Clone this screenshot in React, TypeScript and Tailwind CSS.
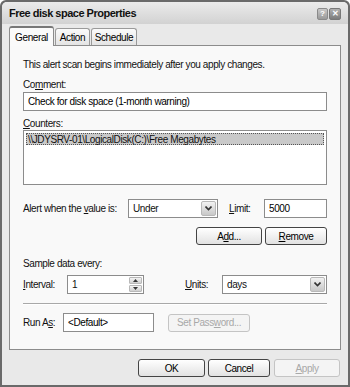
import React from 'react';

const font = { fontFamily: '"Liberation Sans", Arial, sans-serif' };

const U: React.FC<{ children: React.ReactNode }> = ({ children }) => <span className="underline underline-offset-[1px]">{children}</span>;

const Button: React.FC<{ children: React.ReactNode; w: number; disabled?: boolean; className?: string }> = ({ children, w, disabled, className }) => (
    <div
        className={`h-[18px] flex items-center justify-center rounded-[3px] border text-[10px] tracking-[-0.4px] ${
            disabled
                ? 'border-[#c4c4c4] bg-[#f4f4f4] text-[#a8a8a8]'
                : 'border-[#444] bg-gradient-to-b from-[#ffffff] to-[#e2e2e2] text-black'
        } ${className || ''}`}
        style={{ width: w }}
    >
        {children}
    </div>
);

const DropArrow: React.FC = () => (
    <div className="w-[15px] h-[15px] my-[1px] mr-[1px] rounded-[2px] border border-[#b8b8b8] bg-gradient-to-b from-[#f2f2f2] to-[#c8c8c8] flex items-center justify-center">
        <svg width="7" height="5" viewBox="0 0 7 5">
            <path d="M0.5 0.5 L3.5 3.5 L6.5 0.5" fill="none" stroke="#333" strokeWidth="1.6" />
        </svg>
    </div>
);

const Input: React.FC<{ value: string; className?: string }> = ({ value, className }) => (
    <div className={`h-[19px] border border-[#8c8c8c] bg-white flex items-center px-[4px] text-black ${className || ''}`}>
        {value}
    </div>
);

const App: React.FC = () => {
    return (
        <div style={font} className="w-[350px] h-[387px] bg-[#6a6a6a] p-[2px] rounded-t-[6px] overflow-hidden">
            <div className="w-full h-full bg-[#e9e9e9] rounded-t-[5px] flex flex-col">
                {/* title bar */}
                <div className="h-[22px] flex items-center justify-between pl-[7px] pr-[7px] bg-gradient-to-b from-[#ebebeb] to-[#d2d2d2] rounded-t-[5px]">
                    <span className="text-[11px] font-bold text-[#111] tracking-[-0.5px]">Free disk space Properties</span>
                    <div className="flex gap-[1px] mt-[1px]">
                        <div className="w-[11px] h-[12px] rounded-[2px] border border-[#8a8a8a] bg-gradient-to-b from-[#c8c8c8] to-[#9a9a9a] flex items-center justify-center text-white text-[8px] font-bold leading-none">?</div>
                        <div className="w-[12px] h-[12px] rounded-[2px] border border-[#777] bg-gradient-to-b from-[#b0b0b0] to-[#7c7c7c] flex items-center justify-center text-white text-[8px] font-bold leading-none">✕</div>
                    </div>
                </div>

                {/* tabs */}
                <div className="flex items-end h-[21px] pl-[7px] text-[10px] tracking-[-0.4px]">
                    <div className="relative z-10 h-[20px] w-[45px] bg-[#fafafa] border border-b-0 border-[#8c8c8c] rounded-t-[3px] border-t-2 border-t-[#777] flex items-center justify-center text-black -mb-[1px]">
                        General
                    </div>
                    <div className="h-[17px] w-[35px] ml-[1px] bg-gradient-to-b from-[#fbfbfb] to-[#e4e4e4] border border-b-0 border-[#9a9a9a] rounded-t-[3px] flex items-center justify-center text-black">
                        Action
                    </div>
                    <div className="h-[17px] w-[46px] ml-[1px] bg-gradient-to-b from-[#fbfbfb] to-[#e4e4e4] border border-b-0 border-[#9a9a9a] rounded-t-[3px] flex items-center justify-center text-black">
                        Schedule
                    </div>
                </div>

                {/* panel */}
                <div className="mx-[7px] h-[305px] border border-[#8c8c8c] bg-[#f9f9f9] px-[13px] text-[10px] tracking-[-0.4px] text-[#111] leading-[13px]">
                    <div className="mt-[12px]">This alert scan begins immediately after you apply changes.</div>
                    <div className="mt-[7px]">Co<U>m</U>ment:</div>
                    <Input value="Check for disk space (1-month warning)" className="mt-[1px]" />
                    <div className="mt-[6px]"><U>C</U>ounters:</div>
                    <div className="h-[55px] border border-[#8c8c8c] bg-white p-[2px]">
                        <div className="h-[12px] bg-[#c9c9c9] border border-dotted border-[#555] flex items-center px-[1px]">
                            \\JDYSRV-01\LogicalDisk(C:)\Free Megabytes
                        </div>
                    </div>

                    <div className="mt-[14px] flex items-center h-[19px]">
                        <span className="w-[105px]">Alert when the <U>v</U>alue is:</span>
                        <div className="w-[90px] h-[19px] border border-[#8c8c8c] bg-white flex items-center justify-between pl-[4px]">
                            <span>Under</span>
                            <DropArrow />
                        </div>
                        <span className="ml-[11px] w-[35px]"><U>L</U>imit:</span>
                        <Input value="5000" className="flex-1" />
                    </div>

                    <div className="mt-[9px] flex justify-end gap-[3px]">
                        <Button w={66}>A<U>d</U>d...</Button>
                        <Button w={62}><U>R</U>emove</Button>
                    </div>

                    <div className="mt-[12px]">Sample data every:</div>
                    <div className="mt-[5px] flex items-center h-[19px]">
                        <span className="w-[44px]"><U>I</U>nterval:</span>
                        <div className="w-[77px] h-[19px] border border-[#8c8c8c] bg-white flex items-center justify-between pl-[4px]">
                            <span>1</span>
                            <div className="flex flex-col gap-[1px] mr-[1px]">
                                <div className="w-[13px] h-[7px] rounded-[1px] border border-[#b8b8b8] bg-gradient-to-b from-[#f4f4f4] to-[#cfcfcf] flex items-center justify-center">
                                    <svg width="5" height="3" viewBox="0 0 5 3"><path d="M0 3 L2.5 0 L5 3 Z" fill="#333" /></svg>
                                </div>
                                <div className="w-[13px] h-[7px] rounded-[1px] border border-[#b8b8b8] bg-gradient-to-b from-[#f4f4f4] to-[#cfcfcf] flex items-center justify-center">
                                    <svg width="5" height="3" viewBox="0 0 5 3"><path d="M0 0 L2.5 3 L5 0 Z" fill="#333" /></svg>
                                </div>
                            </div>
                        </div>
                        <span className="ml-[41px] w-[37px]"><U>U</U>nits:</span>
                        <div className="flex-1 h-[19px] border border-[#8c8c8c] bg-white flex items-center justify-between pl-[4px]">
                            <span>days</span>
                            <DropArrow />
                        </div>
                    </div>

                    <div className="mt-[9px] border-t border-[#a8a8a8] border-b border-b-white" />

                    <div className="mt-[8px] flex items-center">
                        <span className="w-[40px]">Run A<U>s</U>:</span>
                        <Input value="<Default>" className="w-[91px]" />
                        <Button w={82} disabled className="ml-[14px]">Set Pass<U>w</U>ord...</Button>
                    </div>
                </div>

                {/* bottom buttons */}
                <div className="mt-[9px] flex justify-end gap-[3px] pr-[8px]">
                    <Button w={67}>OK</Button>
                    <Button w={62}>Cancel</Button>
                    <Button w={66} disabled className="ml-[1px]"><U>A</U>pply</Button>
                </div>
            </div>
        </div>
    );
};

export default App;
